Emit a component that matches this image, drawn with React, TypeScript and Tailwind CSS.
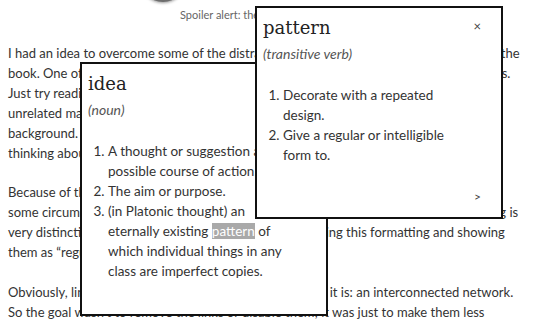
import React from 'react';

const serif = { fontFamily: '"DejaVu Serif", serif' };

function Popup({
  word,
  kind,
  defs,
  className,
  next,
  close,
}: {
  word: string;
  kind: string;
  defs: React.ReactNode[];
  className: string;
  next?: boolean;
  close?: boolean;
}) {
  return (
    <div className={`absolute flex w-[248px] flex-col border-2 border-[#111] bg-white pl-[6px] pt-[6px] ${className}`}>
      <div className="flex items-start justify-between">
        <h2 className="text-[18px] leading-7 text-[#222]" style={serif}>
          {word}
        </h2>
        {close && <span className="mr-[20px] mt-[4px] text-[13px] leading-4 text-[#444]">×</span>}
      </div>
      <p className="mt-[2px] text-[14px] leading-5 italic text-[#555]">{kind}</p>
      <ol className="mt-[21px] list-decimal pl-[20px] pr-[31px] text-[13.5px] leading-5 text-[#333]">
        {defs.map((d, i) => (
          <li key={i}>{d}</li>
        ))}
      </ol>
      {next && (
        <div className="mt-auto flex justify-end pb-[12px] pr-[20px] text-[12px] leading-4 text-[#444]">&gt;</div>
      )}
    </div>
  );
}

export default function App() {
  return (
    <div
      className="relative h-[324px] w-[533px] overflow-hidden bg-white text-[#333]"
      style={{ fontFamily: 'Lato, "Open Sans", sans-serif' }}
    >
      {/* figure */}
      <div className="ml-[140px] -mt-[48px] h-[50px] w-[46px] rounded-full bg-[#6d6d6d] shadow-[0_1px_3px_rgba(0,0,0,0.4)]" />
      <p className="mt-[5px] pl-[180px] text-[11px] leading-4 text-[#666]">Spoiler alert: the whole book is one big network.</p>

      <div className="px-2 text-[13px] leading-5">
        <p className="mt-[20px] whitespace-nowrap">
          I had an idea to overcome some of the distractions that often come along with reading the
          <br />
          book. One of them is the sheer number of links that are scattered across all the chapters.
          <br />
          Just try reading a page where every second word is a link to
          <br />
          unrelated material with a coloured
          <br />
          background.
          <br />
          thinking about it.
        </p>
        <p className="mt-[19px] whitespace-nowrap">
          Because of this, I decided to hide
          <br />
          some circumstances where the colours are actually helpful, but the constant underlining is
          <br />
          very distinctive and noisy, so I’ve experimented with hiding this formatting and showing
          <br />
          them as “regular” text.
        </p>
        <p className="mt-[20px] whitespace-nowrap">
          Obviously, links are very essential here, because of what it is: an interconnected network.
          <br />
          So the goal wasn’t to remove the links or disable them; it was just to make them less
        </p>
      </div>

      <Popup
        word="idea"
        kind="(noun)"
        className="left-[80px] top-[62px] h-[254px]"
        defs={[
          'A thought or suggestion as to a possible course of action.',
          'The aim or purpose.',
          <>
            (in Platonic thought) an eternally existing{' '}
            <span className="bg-[#a9a9a9] text-white">pattern</span> of which individual things in any class are
            imperfect copies.
          </>,
        ]}
      />
      <Popup
        word="pattern"
        kind="(transitive verb)"
        className="left-[255px] top-[6px] h-[213px]"
        close
        next
        defs={['Decorate with a repeated design.', 'Give a regular or intelligible form to.']}
      />
    </div>
  );
}
